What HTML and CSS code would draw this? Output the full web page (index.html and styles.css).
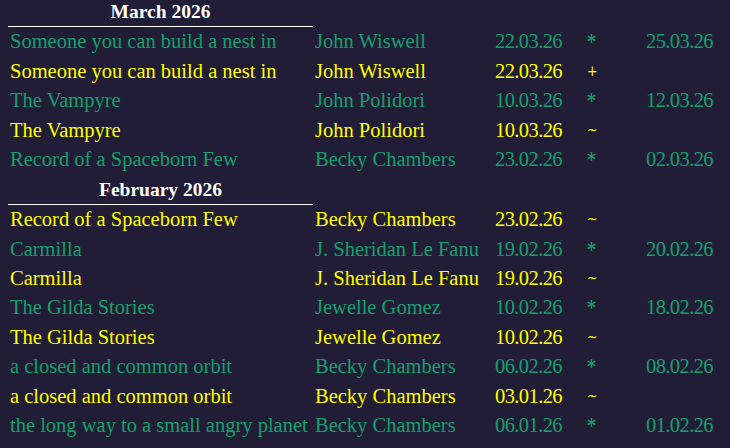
FILE: index.html
```html
<!DOCTYPE html>
<html>
<head>
<meta charset="utf-8">
<link rel="stylesheet" href="styles.css">
</head>
<body>
<div class="wrap">
<table class="log">
  <colgroup>
    <col class="c-title"><col class="c-author"><col class="c-date"><col class="c-mark"><col class="c-end">
  </colgroup>
  <tbody>
    <tr class="month"><th>March 2026</th><td></td><td></td><td></td><td></td></tr>
    <tr class="done"><td>Someone you can build a nest in</td><td>John Wiswell</td><td class="num">22.03.26</td><td class="mark star">*</td><td class="num">25.03.26</td></tr>
    <tr class="open"><td>Someone you can build a nest in</td><td>John Wiswell</td><td class="num">22.03.26</td><td class="mark">+</td><td></td></tr>
    <tr class="done"><td>The Vampyre</td><td>John Polidori</td><td class="num">10.03.26</td><td class="mark star">*</td><td class="num">12.03.26</td></tr>
    <tr class="open"><td>The Vampyre</td><td>John Polidori</td><td class="num">10.03.26</td><td class="mark">~</td><td></td></tr>
    <tr class="done"><td>Record of a Spaceborn Few</td><td>Becky Chambers</td><td class="num">23.02.26</td><td class="mark star">*</td><td class="num">02.03.26</td></tr>
    <tr class="month"><th>February 2026</th><td></td><td></td><td></td><td></td></tr>
    <tr class="open"><td>Record of a Spaceborn Few</td><td>Becky Chambers</td><td class="num">23.02.26</td><td class="mark">~</td><td></td></tr>
    <tr class="done"><td>Carmilla</td><td>J. Sheridan Le Fanu</td><td class="num">19.02.26</td><td class="mark star">*</td><td class="num">20.02.26</td></tr>
    <tr class="open"><td>Carmilla</td><td>J. Sheridan Le Fanu</td><td class="num">19.02.26</td><td class="mark">~</td><td></td></tr>
    <tr class="done"><td>The Gilda Stories</td><td>Jewelle Gomez</td><td class="num">10.02.26</td><td class="mark star">*</td><td class="num">18.02.26</td></tr>
    <tr class="open"><td>The Gilda Stories</td><td>Jewelle Gomez</td><td class="num">10.02.26</td><td class="mark">~</td><td></td></tr>
    <tr class="done"><td>a closed and common orbit</td><td>Becky Chambers</td><td class="num">06.02.26</td><td class="mark star">*</td><td class="num">08.02.26</td></tr>
    <tr class="open"><td>a closed and common orbit</td><td>Becky Chambers</td><td class="num">03.01.26</td><td class="mark">~</td><td></td></tr>
    <tr class="done"><td>the long way to a small angry planet</td><td>Becky Chambers</td><td class="num">06.01.26</td><td class="mark star">*</td><td class="num">01.02.26</td></tr>
    <tr class="month"><th>January 2026</th><td></td><td></td><td></td><td></td></tr>
  </tbody>
</table>
</div>
</body>
</html>
```
FILE: styles.css
```css
html, body {
  margin: 0;
  background: #221d36;
}
body {
  font-family: "Liberation Serif", "DejaVu Serif", serif;
  font-size: 20.5px;
  overflow: hidden;
}
.wrap {
  padding: 0 8px;
  margin-top: -3px;
}
.log {
  border-collapse: collapse;
  table-layout: fixed;
  width: 722px;
}
.c-title { width: 305px; }
.c-author { width: 180px; }
.c-date { width: 92px; }
.c-mark { width: 59px; }
.log td, .log th {
  padding: 0 0 0 2px;
  height: 29.43px;
  line-height: 29.43px;
  white-space: nowrap;
  text-align: left;
  vertical-align: middle;
}
.month th {
  color: #ffffff;
  font-weight: bold;
  font-size: 19.5px;
  text-align: center;
  border-bottom: 1px solid #ffffff;
  padding: 0;
}
.log .num {
  letter-spacing: -0.6px;
}
.log .mark {
  font-family: "DejaVu Serif Condensed", "DejaVu Serif", serif;
  font-stretch: condensed;
  font-size: 14px;
}
.log .star {
  font-size: 19px;
  font-weight: bold;
}
.done td { color: #12a06c; }
.open td { color: #ffff00; }
```
